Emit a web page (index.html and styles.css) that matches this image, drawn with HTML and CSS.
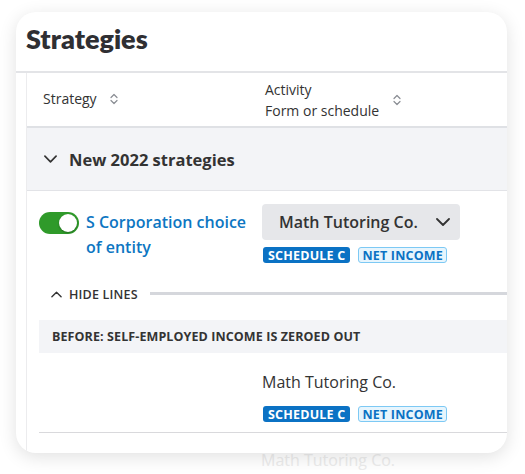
FILE: index.html
```html
<!DOCTYPE html>
<html lang="en">
<head>
    <meta charset="UTF-8">
    <meta name="viewport" content="width=device-width, initial-scale=1.0">
    <title>Strategies</title>
    <link rel="stylesheet" href="styles.css">
</head>
<body>
    <div class="frame">
        <div class="card">
            <h1 class="card-title">Strategies</h1>

            <div class="table">
                <div class="thead">
                    <div class="th th-strategy">
                        <span>Strategy</span>
                        <svg class="sort" viewBox="0 0 8 12" width="8" height="12"><path d="M1 4.5 L4 1.5 L7 4.5 M1 7.5 L4 10.5 L7 7.5" fill="none" stroke="#8a8d93" stroke-width="1.2" stroke-linecap="round" stroke-linejoin="round"/></svg>
                    </div>
                    <div class="th th-activity">
                        <span>Activity<br>Form or schedule</span>
                        <svg class="sort" viewBox="0 0 8 12" width="8" height="12"><path d="M1 4.5 L4 1.5 L7 4.5 M1 7.5 L4 10.5 L7 7.5" fill="none" stroke="#8a8d93" stroke-width="1.2" stroke-linecap="round" stroke-linejoin="round"/></svg>
                    </div>
                </div>

                <div class="group-row">
                    <svg class="chevron" viewBox="0 0 14 8" width="13" height="8"><path d="M1 1 L7 7 L13 1" fill="none" stroke="#333" stroke-width="1.8" stroke-linecap="round" stroke-linejoin="round"/></svg>
                    <span>New 2022 strategies</span>
                </div>

                <div class="strategy-row">
                    <div class="strategy-cell">
                        <div class="toggle"><span class="knob"></span></div>
                        <a class="strategy-name">S Corporation choice of entity</a>
                    </div>
                    <div class="activity-cell">
                        <div class="select">
                            <span>Math Tutoring Co.</span>
                            <svg viewBox="0 0 14 8" width="14" height="8"><path d="M1 1 L7 7 L13 1" fill="none" stroke="#333" stroke-width="1.8" stroke-linecap="round" stroke-linejoin="round"/></svg>
                        </div>
                        <div class="badges">
                            <span class="badge badge-solid">SCHEDULE C</span>
                            <span class="badge badge-outline">NET INCOME</span>
                        </div>
                    </div>
                </div>

                <div class="hide-lines">
                    <svg viewBox="0 0 12 7" width="11" height="7"><path d="M1 6 L6 1 L11 6" fill="none" stroke="#333" stroke-width="1.5" stroke-linecap="round" stroke-linejoin="round"/></svg>
                    <span>HIDE LINES</span>
                    <div class="rule"></div>
                </div>

                <div class="band">BEFORE: SELF-EMPLOYED INCOME IS ZEROED OUT</div>

                <div class="line-row">
                    <div class="line-name">Math Tutoring Co.</div>
                    <div class="badges">
                        <span class="badge badge-solid">SCHEDULE C</span>
                        <span class="badge badge-outline">NET INCOME</span>
                    </div>
                </div>
            </div>
        </div>
        <div class="ghost">Math Tutoring Co.</div>
    </div>
</body>
</html>
```

FILE: styles.css
```css
body {
    margin: 0;
    background: #fff;
    font-family: "Open Sans", Lato, Arial, sans-serif;
    color: #333;
    overflow: hidden;
}

.frame {
    padding: 12px 18px 0 16px;
    position: relative;
    height: 474px;
    box-sizing: border-box;
}

.card {
    width: 491px;
    height: 441px;
    background: #fff;
    border-radius: 20px;
    box-shadow: 0 4px 18px rgba(0, 0, 0, 0.12);
    overflow: hidden;
    position: relative;
    z-index: 1;
}

.card-title {
    margin: 0;
    height: 53px;
    padding-left: 10px;
    padding-bottom: 6px;
    display: flex;
    align-items: center;
    font-family: Lato, "Open Sans", sans-serif;
    font-size: 27px;
    font-weight: 800;
    color: #2f2f33;
    border-bottom: 2px solid #e3e4e7;
}

.table {
    margin-left: 10px;
    width: 520px;
    border-left: 1px solid #ececee;
    height: 400px;
}

.thead {
    display: flex;
    height: 53px;
    border-bottom: 2px solid #dfe1e5;
    font-size: 14px;
    color: #333;
}

.th {
    display: flex;
    align-items: center;
    gap: 13px;
}

.th-strategy {
    width: 222px;
    padding-left: 16px;
    padding-bottom: 2px;
}

.th-activity {
    gap: 14px;
    line-height: 21px;
}

.group-row {
    height: 62px;
    background: #f3f4f7;
    border-bottom: 1px solid #e2e3e7;
    display: flex;
    align-items: center;
    gap: 12px;
    padding-left: 17px;
    font-size: 16.5px;
    font-weight: 700;
    color: #333;
}

.strategy-row {
    display: flex;
    padding-top: 13px;
}

.strategy-cell {
    width: 223px;
    padding-left: 12px;
    display: flex;
    align-items: flex-start;
    gap: 7px;
}

.toggle {
    width: 40px;
    height: 22px;
    margin-top: 8px;
    border-radius: 11px;
    background: #2f9a2a;
    position: relative;
    flex-shrink: 0;
}

.knob {
    position: absolute;
    right: 2px;
    top: 2px;
    width: 18px;
    height: 18px;
    border-radius: 50%;
    background: #fff;
    box-shadow: 0 1px 2px rgba(0, 0, 0, 0.3);
}

.strategy-name {
    width: 172px;
    font-size: 16px;
    font-weight: 600;
    line-height: 25px;
    color: #0d76c2;
    padding-top: 6px;
}

.activity-cell {
    display: flex;
    flex-direction: column;
    gap: 7px;
}

.select {
    width: 198px;
    height: 36px;
    box-sizing: border-box;
    background: #e6e7ea;
    border-radius: 4px;
    display: flex;
    align-items: center;
    justify-content: space-between;
    padding: 0 10px 0 17px;
    font-size: 16px;
    font-weight: 600;
    color: #333;
}

.badges {
    display: flex;
    gap: 8px;
    padding-left: 1px;
}

.badge {
    height: 16px;
    box-sizing: border-box;
    border-radius: 3px;
    padding: 0 5px;
    display: flex;
    align-items: center;
    font-size: 12.5px;
    font-weight: 700;
    letter-spacing: 0.2px;
}

.badge-solid {
    background: #0b72c4;
    color: #fff;
}

.badge-outline {
    background: #e7f5fd;
    border: 1px solid #7dc9f4;
    color: #0b72c4;
    padding: 0 3px;
}

.hide-lines {
    display: flex;
    align-items: center;
    margin-top: 24px;
    padding-left: 24px;
    height: 14px;
    font-size: 12.5px;
    font-weight: 600;
    letter-spacing: 0.2px;
    color: #333;
}

.hide-lines span {
    margin-left: 7px;
}

.rule {
    flex: 1;
    height: 3px;
    background: #d5d7dc;
    margin-left: 12px;
    margin-top: -1px;
}

.band {
    margin: 19px 0 0 12px;
    height: 33px;
    background: #f3f4f7;
    display: flex;
    align-items: center;
    padding-left: 13px;
    font-size: 12.5px;
    font-weight: 700;
    letter-spacing: 0.1px;
    color: #333;
}

.line-row {
    margin-left: 12px;
    padding: 17px 0 10px 223px;
    border-bottom: 1px solid #d9d9dc;
}

.line-name {
    font-size: 16px;
    color: #333;
    line-height: 24px;
    margin-bottom: 12px;
}

.ghost {
    position: absolute;
    left: 261px;
    top: 449px;
    font-size: 16px;
    color: #ececec;
}
```
